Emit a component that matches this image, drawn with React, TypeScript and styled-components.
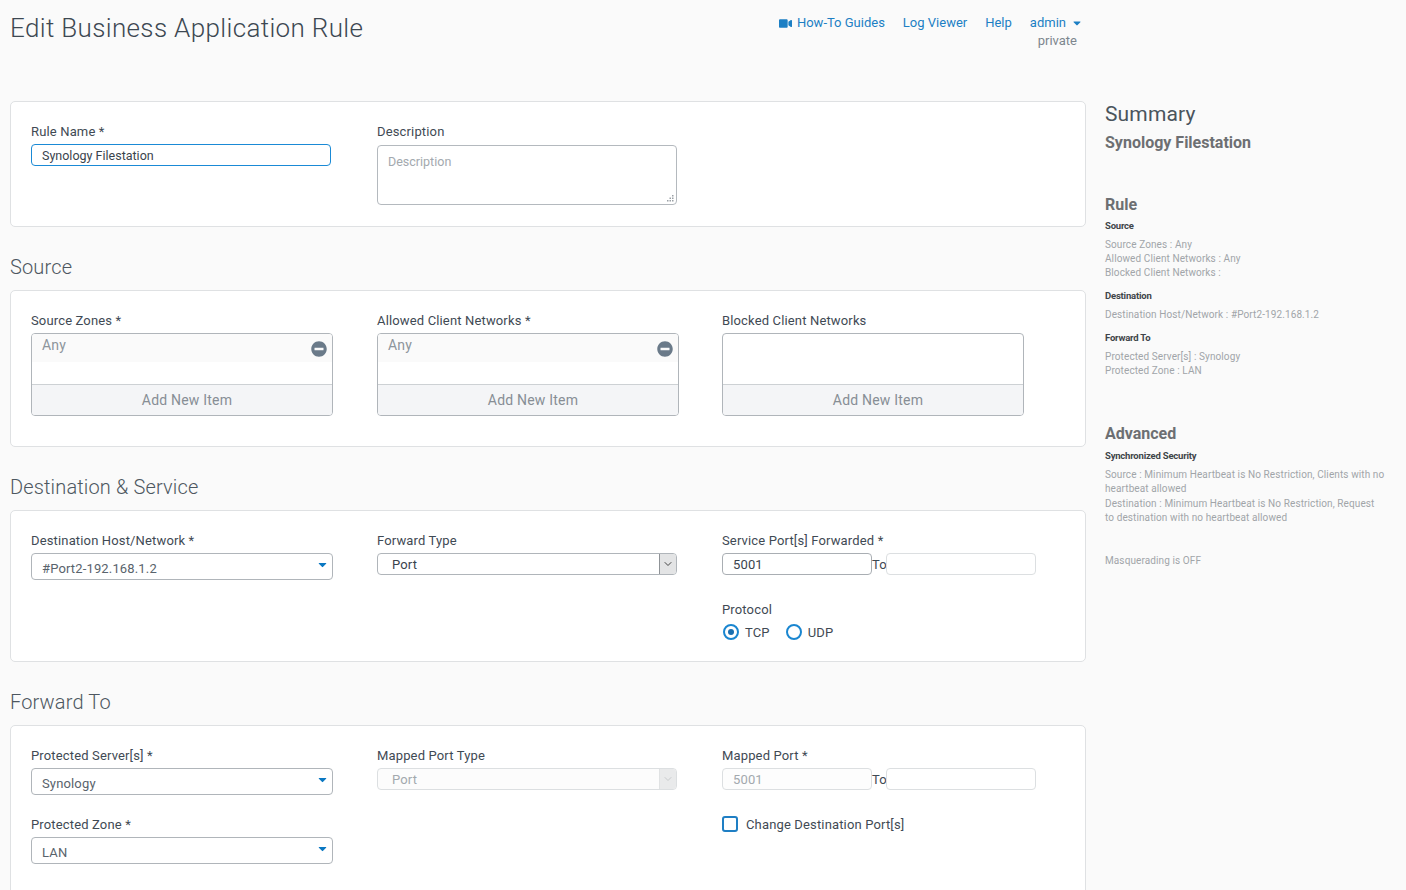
import React from 'react'
import styled, { createGlobalStyle } from 'styled-components'
import { FaVideo, FaCaretDown, FaMinusCircle } from 'react-icons/fa'
import { LuChevronDown } from 'react-icons/lu'

const GlobalStyle = createGlobalStyle`
  html, body {
    margin: 0;
    height: 890px;
    overflow: hidden;
    background: #fafafa;
  }
  body {
    font-family: Roboto, "Liberation Sans", sans-serif;
    font-size: 13px;
    letter-spacing: 0.15px;
    color: #3f4a54;
  }
  * { box-sizing: border-box; }
`

const Page = styled.div`
  display: flex;
  align-items: flex-start;
  padding-left: 10px;
`

const Main = styled.div`
  width: 1076px;
  flex: none;
`

const Header = styled.header`
  height: 101px;
  display: flex;
  justify-content: space-between;
  align-items: flex-start;
`

const Title = styled.h1`
  margin: 12px 0 0;
  font-size: 26px;
  line-height: 32px;
  font-weight: 300;
  letter-spacing: 0.35px;
  color: #3d4852;
`

const TopNav = styled.nav`
  display: flex;
  flex-direction: column;
  align-items: flex-end;
  padding: 14px 3px 0 0;
`

const NavLinks = styled.div`
  display: flex;
  gap: 18px;
  line-height: 18px;
  letter-spacing: 0;
`

const NavLink = styled.a`
  display: flex;
  align-items: center;
  gap: 5px;
  color: #1c7fc4;
`

const Tenant = styled.div`
  margin-right: 6px;
  line-height: 18px;
  letter-spacing: 0;
  color: #7d868e;
`

const Card = styled.section<{ $pb: number }>`
  background: #fff;
  border: 1px solid #dfe1e3;
  border-radius: 5px;
  padding: 20px 20px ${(p) => p.$pb}px;
`

const SectionTitle = styled.h2`
  margin: 0;
  height: 63px;
  padding-top: 27px;
  font-size: 20px;
  line-height: 26px;
  font-weight: 300;
  color: #4d5760;
`

const Row = styled.div`
  display: grid;
  grid-template-columns: 346px 345px 340px;
`

const Field = styled.div<{ $mt?: number }>`
  margin-top: ${(p) => p.$mt ?? 0}px;
`

const Label = styled.div`
  height: 18px;
  line-height: 20px;
  margin-bottom: 4px;
  color: #3f4a54;
`

const TextBox = styled.div`
  width: 300px;
  height: 22px;
  padding: 0 10px;
  font-size: 12.5px;
  letter-spacing: 0;
  line-height: 21px;
  border: 1px solid #1a8ad6;
  border-radius: 4px;
  background: #fff;
  color: #3a444d;
`

const TextArea = styled.div`
  position: relative;
  width: 300px;
  height: 60px;
  margin-top: 5px;
  padding: 7px 10px;
  font-size: 12.5px;
  letter-spacing: 0;
  line-height: 17px;
  border: 1px solid #b4b9be;
  border-radius: 4px;
  background: #fff;
  color: #a3a9ae;
`

const Grip = styled.svg`
  position: absolute;
  right: 1px;
  bottom: 1px;
`

const ListBox = styled.div`
  width: 302px;
  height: 83px;
  display: flex;
  flex-direction: column;
  border: 1px solid #b0b5ba;
  border-radius: 4px;
  overflow: hidden;
  background: #fff;
`

const ListItems = styled.div`
  flex: 1;
`

const ListItem = styled.div`
  height: 28px;
  display: flex;
  justify-content: space-between;
  padding: 2px 5px 0 10px;
  font-size: 14px;
  line-height: 18px;
  background: #fafafa;
  color: #8d959c;

  svg {
    margin-top: 5px;
    color: #6a7a89;
  }
`

const AddNew = styled.div`
  height: 31px;
  border-top: 1px solid #cdd1d4;
  background: #f4f5f7;
  text-align: center;
  padding-left: 10px;
  font-size: 14px;
  letter-spacing: 0.2px;
  line-height: 31px;
  color: #878e95;
`

const ComboBox = styled.div`
  width: 302px;
  height: 27px;
  display: flex;
  justify-content: space-between;
  padding: 6px 3px 0 10px;
  line-height: 18px;
  border: 1px solid #b0b5ba;
  border-radius: 4px;
  background: #fff;
  color: #59636c;

  svg {
    margin-top: -2px;
    color: #0b78c2;
  }
`

const SelectBox = styled.div<{ $off?: boolean }>`
  width: 300px;
  height: 22px;
  display: flex;
  justify-content: space-between;
  padding-left: 14px;
  line-height: 21px;
  border: 1px solid ${(p) => (p.$off ? '#dcdfe1' : '#b0b5ba')};
  border-radius: 4px;
  overflow: hidden;
  background: ${(p) => (p.$off ? '#fcfcfc' : '#fff')};
  color: ${(p) => (p.$off ? '#a3a9ae' : '#3a444d')};
`

const SelectArrow = styled.div<{ $off?: boolean }>`
  width: 17px;
  display: flex;
  align-items: center;
  justify-content: center;
  background: ${(p) => (p.$off ? '#e9eaeb' : '#e3e4e5')};
  border-left: 1px solid ${(p) => (p.$off ? '#e0e2e3' : '#8f9397')};
  color: ${(p) => (p.$off ? '#c8cbcd' : '#444')};
`

const PortRow = styled.div`
  display: flex;
  align-items: center;
`

const PortInput = styled.div<{ $tone: 'dark' | 'light' | 'off' }>`
  width: 150px;
  height: 22px;
  padding: 0 10px;
  line-height: 21px;
  border: 1px solid ${(p) => (p.$tone === 'dark' ? '#a9aeb3' : '#dcdfe1')};
  border-radius: 4px;
  background: ${(p) => (p.$tone === 'off' ? '#fdfdfd' : '#fff')};
  color: ${(p) => (p.$tone === 'off' ? '#a3a9ae' : '#3a444d')};
`

const To = styled.span`
  width: 14px;
  letter-spacing: 0;
  color: #3f4a54;
`

const Options = styled.div`
  display: flex;
  align-items: center;
  height: 18px;
  gap: 15px;
  margin-top: 5px;
`

const Option = styled.div`
  display: flex;
  align-items: center;
  gap: 6px;
`

const Radio = styled.span<{ $on?: boolean }>`
  width: 16px;
  height: 16px;
  margin-left: 1px;
  display: flex;
  align-items: center;
  justify-content: center;
  border: 2px solid #1a86d0;
  border-radius: 50%;
  background: #fff;

  &::after {
    content: '';
    width: 6px;
    height: 6px;
    border-radius: 50%;
    background: ${(p) => (p.$on ? '#1a6fb0' : 'transparent')};
  }
`

const Check = styled.span`
  width: 16px;
  height: 16px;
  border: 2px solid #1f7fc4;
  border-radius: 3px;
  background: #fff;
`

const CheckRow = styled(Option)`
  gap: 8px;
  margin-top: 26px;
`

const Summary = styled.aside`
  width: 280px;
  flex: none;
  margin-left: 19px;
  padding-top: 101px;
`

const SummaryTitle = styled.div`
  font-size: 21px;
  line-height: 26px;
  color: #4a545d;
`

const SummaryName = styled.div`
  margin-top: 6px;
  font-size: 16px;
  line-height: 20px;
  font-weight: 700;
  letter-spacing: 0;
  color: #6d6f72;
`

const GroupTitle = styled.div<{ $mt: number }>`
  margin-top: ${(p) => p.$mt}px;
  font-size: 16px;
  line-height: 20px;
  font-weight: 700;
  letter-spacing: 0;
  color: #6d6f72;
`

const SmallHead = styled.div<{ $mt: number }>`
  margin-top: ${(p) => p.$mt}px;
  margin-bottom: 5px;
  font-size: 9.5px;
  line-height: 14px;
  font-weight: 700;
  letter-spacing: -0.2px;
  color: #3f4549;
`

const SmallText = styled.div<{ $mt?: number }>`
  margin-top: ${(p) => p.$mt ?? 0}px;
  font-size: 10px;
  line-height: 14.2px;
  letter-spacing: 0.1px;
  color: #a1a5a9;
`

const ResizeGrip = () => (
  <Grip width="9" height="9" viewBox="0 0 9 9" fill="#9aa0a5">
    <rect x="6" y="1" width="1.5" height="1.5" />
    <rect x="3.5" y="3.5" width="1.5" height="1.5" />
    <rect x="6" y="3.5" width="1.5" height="1.5" />
    <rect x="1" y="6" width="1.5" height="1.5" />
    <rect x="3.5" y="6" width="1.5" height="1.5" />
    <rect x="6" y="6" width="1.5" height="1.5" />
  </Grip>
)

const NetworkList = ({ label, item }: { label: string; item?: string }) => (
  <Field>
    <Label>{label}</Label>
    <ListBox>
      <ListItems>
        {item && (
          <ListItem>
            {item}
            <FaMinusCircle size={16} />
          </ListItem>
        )}
      </ListItems>
      <AddNew>Add New Item</AddNew>
    </ListBox>
  </Field>
)

const Combo = ({ label, value, mt }: { label: string; value: string; mt?: number }) => (
  <Field $mt={mt}>
    <Label>{label}</Label>
    <ComboBox>
      {value}
      <FaCaretDown size={13} />
    </ComboBox>
  </Field>
)

const PortRange = ({ tone, value }: { tone: 'dark' | 'off'; value: string }) => (
  <PortRow>
    <PortInput $tone={tone}>{value}</PortInput>
    <To>To</To>
    <PortInput $tone="light" />
  </PortRow>
)

export default function App() {
  return (
    <Page>
      <GlobalStyle />
      <Main>
        <Header>
          <Title>Edit Business Application Rule</Title>
          <TopNav>
            <NavLinks>
              <NavLink>
                <FaVideo size={13} />
                How-To Guides
              </NavLink>
              <NavLink>Log Viewer</NavLink>
              <NavLink>Help</NavLink>
              <NavLink>
                admin
                <FaCaretDown size={12} />
              </NavLink>
            </NavLinks>
            <Tenant>private</Tenant>
          </TopNav>
        </Header>

        <Card $pb={21}>
          <Row>
            <Field>
              <Label>Rule Name *</Label>
              <TextBox>Synology Filestation</TextBox>
            </Field>
            <Field>
              <Label>Description</Label>
              <TextArea>
                Description
                <ResizeGrip />
              </TextArea>
            </Field>
          </Row>
        </Card>

        <SectionTitle>Source</SectionTitle>
        <Card $pb={30}>
          <Row>
            <NetworkList label="Source Zones *" item="Any" />
            <NetworkList label="Allowed Client Networks *" item="Any" />
            <NetworkList label="Blocked Client Networks" />
          </Row>
        </Card>

        <SectionTitle>Destination &amp; Service</SectionTitle>
        <Card $pb={20}>
          <Row>
            <Combo label="Destination Host/Network *" value="#Port2-192.168.1.2" />
            <Field>
              <Label>Forward Type</Label>
              <SelectBox>
                Port
                <SelectArrow>
                  <LuChevronDown size={12} />
                </SelectArrow>
              </SelectBox>
            </Field>
            <Field>
              <Label>Service Port[s] Forwarded *</Label>
              <PortRange tone="dark" value="5001" />
              <Field $mt={25}>
                <Label>Protocol</Label>
                <Options>
                  <Option>
                    <Radio $on />
                    TCP
                  </Option>
                  <Option>
                    <Radio />
                    UDP
                  </Option>
                </Options>
              </Field>
            </Field>
          </Row>
        </Card>

        <SectionTitle>Forward To</SectionTitle>
        <Card $pb={60}>
          <Row>
            <Field>
              <Combo label="Protected Server[s] *" value="Synology" />
              <Combo label="Protected Zone *" value="LAN" mt={20} />
            </Field>
            <Field>
              <Label>Mapped Port Type</Label>
              <SelectBox $off>
                Port
                <SelectArrow $off>
                  <LuChevronDown size={12} />
                </SelectArrow>
              </SelectBox>
            </Field>
            <Field>
              <Label>Mapped Port *</Label>
              <PortRange tone="off" value="5001" />
              <CheckRow>
                <Check />
                Change Destination Port[s]
              </CheckRow>
            </Field>
          </Row>
        </Card>
      </Main>

      <Summary>
        <SummaryTitle>Summary</SummaryTitle>
        <SummaryName>Synology Filestation</SummaryName>

        <GroupTitle $mt={42}>Rule</GroupTitle>
        <SmallHead $mt={4}>Source</SmallHead>
        <SmallText>Source Zones : Any</SmallText>
        <SmallText>Allowed Client Networks : Any</SmallText>
        <SmallText>Blocked Client Networks :</SmallText>
        <SmallHead $mt={8}>Destination</SmallHead>
        <SmallText>Destination Host/Network : #Port2-192.168.1.2</SmallText>
        <SmallHead $mt={9}>Forward To</SmallHead>
        <SmallText>Protected Server[s] : Synology</SmallText>
        <SmallText>Protected Zone : LAN</SmallText>

        <GroupTitle $mt={46}>Advanced</GroupTitle>
        <SmallHead $mt={5}>Synchronized Security</SmallHead>
        <SmallText>Source : Minimum Heartbeat is No Restriction, Clients with no heartbeat allowed</SmallText>
        <SmallText>Destination : Minimum Heartbeat is No Restriction, Request to destination with no heartbeat allowed</SmallText>
        <SmallText $mt={29}>Masquerading is OFF</SmallText>
      </Summary>
    </Page>
  )
}
